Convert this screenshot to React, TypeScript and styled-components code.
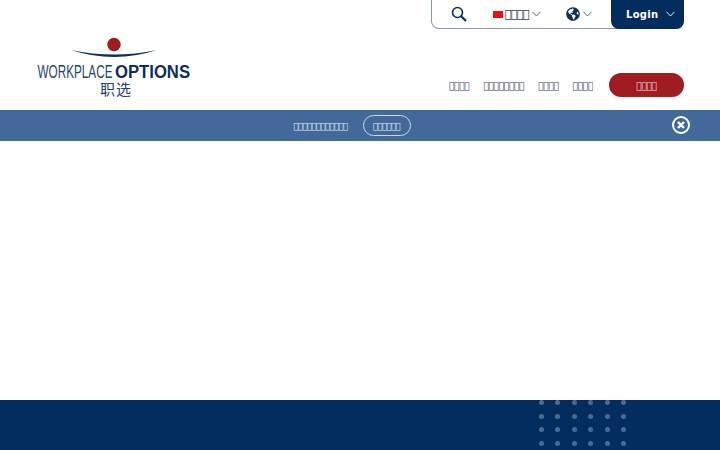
import styled, { createGlobalStyle } from "styled-components";
import { FaGlobeAmericas } from "react-icons/fa";

const GlobalStyle = createGlobalStyle`
  html, body {
    margin: 0;
    padding: 0;
    background: #fff;
    overflow: hidden;
  }
  * {
    box-sizing: border-box;
  }
  body {
    font-family: "DejaVu Sans", sans-serif;
  }
`;

const Page = styled.div`
  width: 720px;
  height: 450px;
  display: flex;
  flex-direction: column;
  overflow: hidden;
`;

const Header = styled.header`
  height: 110px;
  display: flex;
  flex-direction: column;
  padding: 0 36px 0 37px;
`;

const TopRow = styled.div`
  display: flex;
  justify-content: flex-end;
`;

const UtilityBar = styled.div`
  width: 253px;
  height: 29px;
  display: flex;
  align-items: center;
  border: 1px solid #8a97a8;
  border-top: 0;
  border-radius: 0 0 8px 8px;
  padding-left: 19px;
`;

const SearchButton = styled.span`
  display: flex;
  width: 16px;
  color: #0b2f5e;
  margin-right: 25px;
`;

const Flag = styled.span`
  width: 10px;
  height: 7px;
  background: #e60f14;
  margin-left: 1px;
  margin-right: 2px;
`;

const LangLabel = styled.span`
  font-size: 11.5px;
  letter-spacing: -0.9px;
  color: #2f4059;
  margin-right: 3px;
  opacity: 0.99;
`;

const Chevron = styled.svg<{ $light?: boolean }>`
  width: 9px;
  height: 6px;
  fill: none;
  stroke: ${(p) => (p.$light ? "#dfe6ef" : "#54657c")};
  stroke-width: 1;
`;

const GlobeWrap = styled.span`
  display: flex;
  color: #0b2f5e;
  font-size: 14px;
  margin: 0 3px 0 25px;
`;

const LoginButton = styled.div`
  width: 73px;
  height: 29px;
  margin-left: auto;
  margin-right: -1px;
  background: #022d5e;
  border-radius: 0 0 8px 8px;
  color: #fff;
  font-size: 10px;
  font-weight: 700;
  letter-spacing: 0.3px;
  display: flex;
  align-items: center;
  gap: 8px;
  padding-left: 15px;
`;

const BottomRow = styled.div`
  display: flex;
  justify-content: space-between;
  align-items: flex-start;
`;

const Logo = styled.svg`
  width: 170px;
  height: 70px;
  margin-top: 8px;
`;

const Nav = styled.nav`
  display: flex;
  align-items: center;
  gap: 14px;
  margin-top: 44px;
`;

const NavLink = styled.a`
  font-size: 9.5px;
  letter-spacing: -0.6px;
  color: #2f4059;
  opacity: 0.99;
`;

const ContactButton = styled.a`
  width: 75px;
  height: 24px;
  margin-left: 2px;
  border-radius: 12px;
  background: #a01c22;
  color: #f3dcdd;
  font-size: 9.5px;
  letter-spacing: -0.6px;
  display: flex;
  align-items: center;
  justify-content: center;
`;

const Banner = styled.div`
  position: relative;
  height: 31px;
  background: #416a9b;
  display: flex;
  align-items: center;
  justify-content: center;
  gap: 15px;
  color: #e3eaf3;
  font-size: 8.5px;
  letter-spacing: -0.6px;
  padding-right: 16px;
`;

const BannerButton = styled.a`
  width: 48px;
  height: 21px;
  border: 1px solid #cfdbe9;
  border-radius: 11px;
  display: flex;
  align-items: center;
  justify-content: center;
`;

const CloseIcon = styled.svg`
  position: absolute;
  right: 29px;
  top: 5px;
  width: 20px;
  height: 20px;
`;

const Content = styled.main`
  flex: 1;
  background: #fff;
`;

const Footer = styled.footer`
  height: 50px;
  background: #022d5e;
  display: flex;
  justify-content: flex-end;
  padding-right: 94px;
  overflow: hidden;
`;

const DotGrid = styled.div`
  display: grid;
  grid-template-columns: repeat(6, 5px);
  grid-auto-rows: 5px;
  column-gap: 11.4px;
  row-gap: 8.7px;
`;

const Dot = styled.span`
  border-radius: 50%;
  background: #4d6a92;
`;

const Down = ({ light }: { light?: boolean }) => (
  <Chevron $light={light} viewBox="0 0 9 6">
    <polyline points="0.5,0.8 4.5,5 8.5,0.8" />
  </Chevron>
);

const App = () => {
  return (
    <Page>
      <GlobalStyle />
      <Header>
        <TopRow>
          <UtilityBar>
            <SearchButton>
              <svg width="16" height="16" viewBox="0 0 16 16" fill="none" stroke="currentColor">
                <circle cx="6.5" cy="6.5" r="5" strokeWidth="1.6" />
                <line x1="10.2" y1="10.2" x2="15" y2="15" strokeWidth="2.2" />
              </svg>
            </SearchButton>
            <Flag />
            <LangLabel>{"\uE000".repeat(4)}</LangLabel>
            <Down />
            <GlobeWrap>
              <FaGlobeAmericas />
            </GlobeWrap>
            <Down />
            <LoginButton>
              Login
              <Down light />
            </LoginButton>
          </UtilityBar>
        </TopRow>
        <BottomRow>
          <Logo viewBox="0 0 170 70">
            <circle cx="77" cy="7.5" r="6.7" fill="#a01c22" />
            <path d="M34 13 Q77 27 120 13 Q77 22 34 13 Z" fill="#0b2f5e" />
            <text x="0.5" y="41" fontFamily="Liberation Sans, sans-serif" fontSize="19" fill="#1f4272" textLength="75" lengthAdjust="spacingAndGlyphs">
              WORKPLACE
            </text>
            <text x="78" y="41" fontFamily="Liberation Sans, sans-serif" fontSize="18" fontWeight="700" fill="#0b2f5e" textLength="75" lengthAdjust="spacingAndGlyphs">
              OPTIONS
            </text>
            <text x="63" y="58" fontFamily="Noto Sans CJK SC, sans-serif" fontSize="15" letterSpacing="1" fill="#1f4272">
              职选
            </text>
          </Logo>
          <Nav>
            <NavLink>{"\uE000".repeat(4)}</NavLink>
            <NavLink>{"\uE000".repeat(8)}</NavLink>
            <NavLink>{"\uE000".repeat(4)}</NavLink>
            <NavLink>{"\uE000".repeat(4)}</NavLink>
            <ContactButton>{"\uE000".repeat(4)}</ContactButton>
          </Nav>
        </BottomRow>
      </Header>
      <Banner>
        <span>{"\uE000".repeat(12)}</span>
        <BannerButton>{"\uE000".repeat(6)}</BannerButton>
        <CloseIcon viewBox="0 0 20 20" fill="none" stroke="#fff">
          <circle cx="10" cy="10" r="8" strokeWidth="2" />
          <path d="M7 7 L13 13 M13 7 L7 13" strokeWidth="2.4" />
        </CloseIcon>
      </Banner>
      <Content />
      <Footer>
        <DotGrid>
          {Array.from({ length: 24 }, (_, i) => (
            <Dot key={i} />
          ))}
        </DotGrid>
      </Footer>
    </Page>
  );
};

export default App;
